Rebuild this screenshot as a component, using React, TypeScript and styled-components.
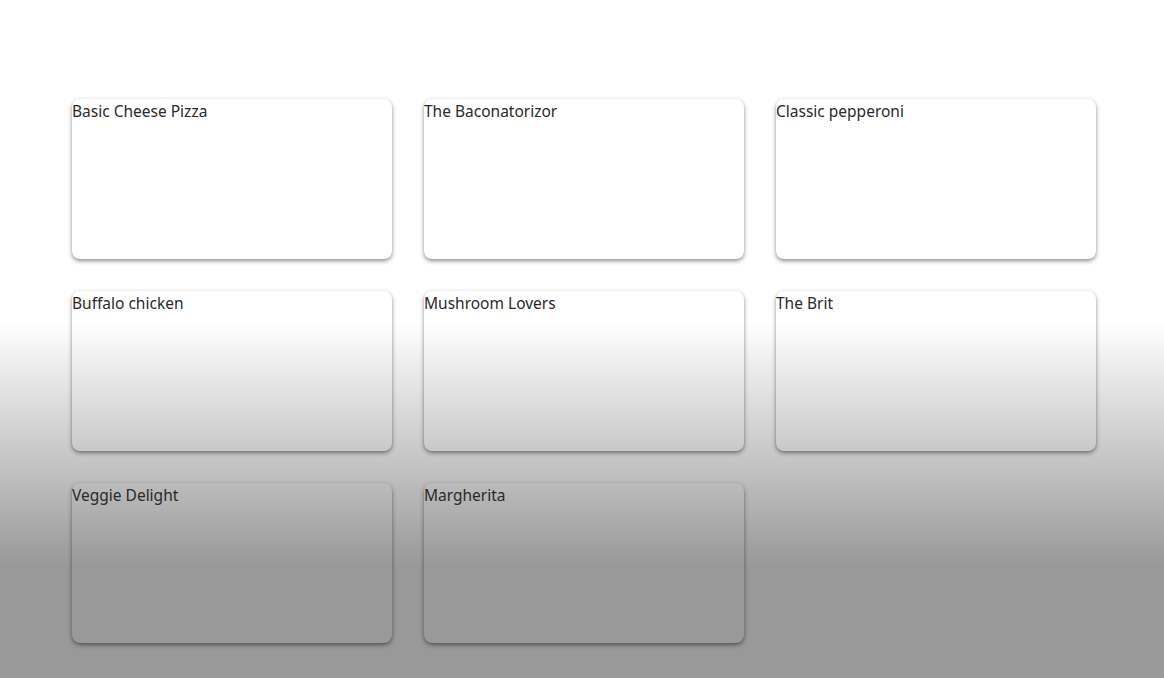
import React from "react";
import styled, { createGlobalStyle } from "styled-components";

const Global = createGlobalStyle`
  html, body { margin: 0; padding: 0; }
  body {
    min-height: 678px;
    background: linear-gradient(to bottom, #ffffff 322px, #999999 565px);
    font-family: "Noto Sans", "Noto Sans CJK KR", sans-serif;
    color: #2a2a2a;
  }
`;

const Page = styled.main`
  padding: 99px 72px 35px;
`;

const Grid = styled.div`
  display: grid;
  grid-template-columns: repeat(3, 320px);
  grid-auto-rows: 160px;
  gap: 32px;
`;

const Card = styled.div`
  border-radius: 8px;
  box-shadow: 0 2px 4px rgba(0, 0, 0, 0.45), 0 0 2px rgba(0, 0, 0, 0.04);
  font-size: 15.5px;
  line-height: 24px;
`;

const pizzas = [
  "Basic Cheese Pizza",
  "The Baconatorizor",
  "Classic pepperoni",
  "Buffalo chicken",
  "Mushroom Lovers",
  "The Brit",
  "Veggie Delight",
  "Margherita",
];

export default function App() {
  return (
    <>
      <Global />
      <Page>
        <Grid>
          {pizzas.map((p) => (
            <Card key={p}>{p}</Card>
          ))}
        </Grid>
      </Page>
    </>
  );
}
